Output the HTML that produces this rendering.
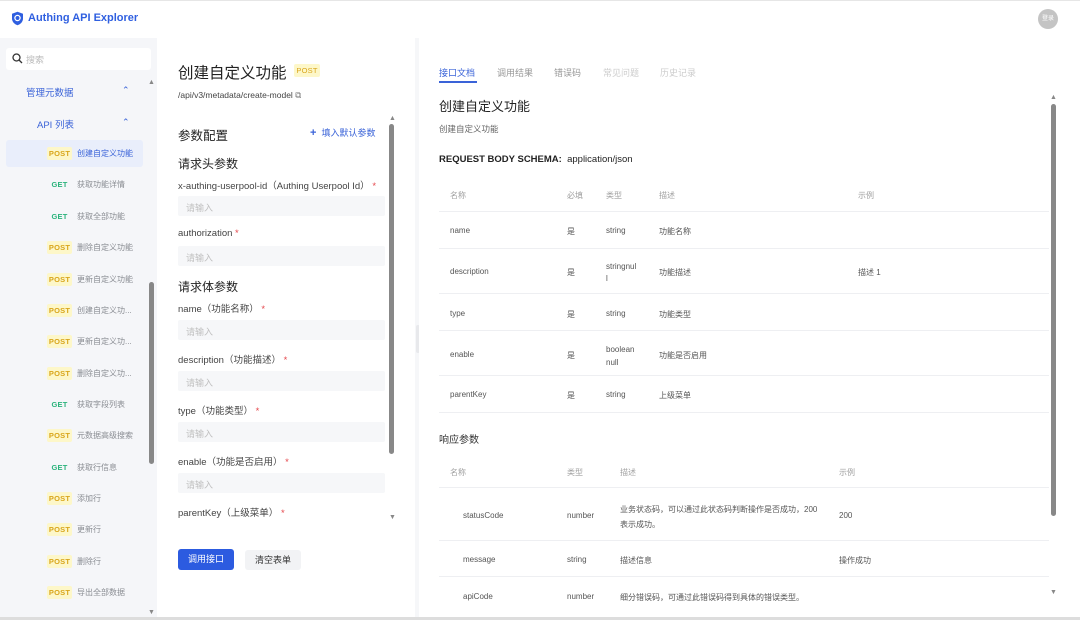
<!DOCTYPE html>
<html><head><meta charset="utf-8"><style>
*{margin:0;padding:0;box-sizing:border-box}
body{width:1080px;height:620px;overflow:hidden;background:#f6f7f9;font-family:"Liberation Sans","Noto Sans CJK SC",sans-serif;color:#333;position:relative}
.a{position:absolute;white-space:nowrap}
.hdr{left:0;top:0;width:1080px;height:38px;background:#fff;border-top:1px solid #e6e6e6}
.side{left:0;top:38px;width:157px;height:582px;background:#f5f6f9}
.mid{left:157px;top:38px;width:258px;height:582px;background:#fff}
.right{left:419px;top:38px;width:661px;height:582px;background:#fff}
.m{font-size:7.5px;width:25px;height:13px;line-height:13px;text-align:center;border-radius:2px;font-weight:bold;letter-spacing:.2px}
.post{background:#fdf7c9;color:#d9a61c}
.get{color:#2bb37c}
.it{font-size:8px;color:#8a8d93}
.lab{font-size:9.5px;color:#444}
.star{color:#e5484d}
.inp{left:178px;width:207px;height:20px;background:#f6f7f9;border-radius:2px;font-size:9px;color:#c0c0c0;padding:5px 8px}
.h{font-size:12px;color:#222}
.th{font-size:8px;color:#a0a0a0}
.td{font-size:8px;color:#555}
.ln{height:1px;background:#eeeff2}
.bar{background:#888;border-radius:3px}
.tri{font-size:7px;color:#888}
</style></head><body>
<div class="a hdr"></div>
<svg class="a" style="left:11px;top:11px" width="13" height="15" viewBox="0 0 13 15"><path d="M6.5 0.8L12 2.8V7.5C12 10.8 9.6 13.2 6.5 14.2C3.4 13.2 1 10.8 1 7.5V2.8Z" fill="#2f5fe0"/><circle cx="6.5" cy="7" r="2.6" fill="none" stroke="#fff" stroke-width="1.3"/></svg>
<div class="a" style="left:28px;top:12px;font-size:11px;font-weight:bold;color:#2f5fe0">Authing API Explorer</div>
<div class="a" style="left:1038px;top:9px;width:20px;height:20px;border-radius:50%;background:#c4c4c4;font-size:6px;color:#fff;text-align:center;line-height:20px">登录</div>

<div class="a side"></div>
<div class="a" style="left:6px;top:48px;width:145px;height:22px;background:#fff;border-radius:3px"></div>
<svg class="a" style="left:12px;top:53px" width="11" height="11" viewBox="0 0 11 11"><circle cx="4.5" cy="4.5" r="3.5" fill="none" stroke="#333" stroke-width="1.3"/><path d="M7 7L10 10" stroke="#333" stroke-width="1.3"/></svg>
<div class="a it" style="left:26px;top:53px;color:#bbb;font-size:9px">搜索</div>
<div class="a" style="left:26px;top:85px;font-size:9.5px;color:#3a63d8">管理元数据</div>
<div class="a" style="left:122px;top:85px;font-size:9px;color:#3a63d8">⌃</div>
<div class="a" style="left:37px;top:117px;font-size:9.5px;color:#3a63d8">API 列表</div>
<div class="a" style="left:122px;top:117px;font-size:9px;color:#3a63d8">⌃</div>
<div class="a" style="left:6px;top:140px;width:137px;height:27px;background:#e9eefb;border-radius:3px"></div>
<div class="a m post" style="left:47px;top:147px">POST</div><div class="a it" style="left:77px;top:148px;color:#3a63d8">创建自定义功能</div>
<div class="a m get" style="left:47px;top:178px">GET</div><div class="a it" style="left:77px;top:179px">获取功能详情</div>
<div class="a m get" style="left:47px;top:210px">GET</div><div class="a it" style="left:77px;top:211px">获取全部功能</div>
<div class="a m post" style="left:47px;top:241px">POST</div><div class="a it" style="left:77px;top:242px">删除自定义功能</div>
<div class="a m post" style="left:47px;top:273px">POST</div><div class="a it" style="left:77px;top:274px">更新自定义功能</div>
<div class="a m post" style="left:47px;top:304px">POST</div><div class="a it" style="left:77px;top:305px">创建自定义功...</div>
<div class="a m post" style="left:47px;top:335px">POST</div><div class="a it" style="left:77px;top:336px">更新自定义功...</div>
<div class="a m post" style="left:47px;top:367px">POST</div><div class="a it" style="left:77px;top:368px">删除自定义功...</div>
<div class="a m get" style="left:47px;top:398px">GET</div><div class="a it" style="left:77px;top:399px">获取字段列表</div>
<div class="a m post" style="left:47px;top:429px">POST</div><div class="a it" style="left:77px;top:430px">元数据高级搜索</div>
<div class="a m get" style="left:47px;top:461px">GET</div><div class="a it" style="left:77px;top:462px">获取行信息</div>
<div class="a m post" style="left:47px;top:492px">POST</div><div class="a it" style="left:77px;top:493px">添加行</div>
<div class="a m post" style="left:47px;top:523px">POST</div><div class="a it" style="left:77px;top:524px">更新行</div>
<div class="a m post" style="left:47px;top:555px">POST</div><div class="a it" style="left:77px;top:556px">删除行</div>
<div class="a m post" style="left:47px;top:586px">POST</div><div class="a it" style="left:77px;top:587px">导出全部数据</div>
<div class="a tri" style="left:148px;top:79px">▲</div>
<div class="a bar" style="left:149px;top:282px;width:5px;height:182px"></div>
<div class="a tri" style="left:148px;top:609px">▼</div>

<div class="a mid"></div>
<div class="a" style="left:178px;top:61px;font-size:15.5px;color:#222">创建自定义功能</div>
<div class="a m post" style="left:294px;top:64px;font-weight:normal;width:26px">POST</div>
<div class="a" style="left:178px;top:90px;font-size:8.5px;color:#444">/api/v3/metadata/create-model <span style="color:#777">⧉</span></div>
<div class="a" style="left:178px;top:125px;font-size:12.5px;color:#222">参数配置</div>
<div class="a" style="left:310px;top:126px;font-size:9px;color:#3a63d8"><b style="font-size:11px">+</b>&nbsp; 填入默认参数</div>
<div class="a h" style="left:178px;top:155px">请求头参数</div>
<div class="a lab" style="left:178px;top:178px">x-authing-userpool-id（Authing Userpool Id） <span class="star">*</span></div>
<div class="a inp" style="top:196px">请输入</div>
<div class="a lab" style="left:178px;top:228px">authorization <span class="star">*</span></div>
<div class="a inp" style="top:246px">请输入</div>
<div class="a h" style="left:178px;top:278px">请求体参数</div>
<div class="a lab" style="left:178px;top:301px">name（功能名称） <span class="star">*</span></div>
<div class="a inp" style="top:320px">请输入</div>
<div class="a lab" style="left:178px;top:352px">description（功能描述） <span class="star">*</span></div>
<div class="a inp" style="top:371px">请输入</div>
<div class="a lab" style="left:178px;top:403px">type（功能类型） <span class="star">*</span></div>
<div class="a inp" style="top:422px">请输入</div>
<div class="a lab" style="left:178px;top:454px">enable（功能是否启用） <span class="star">*</span></div>
<div class="a inp" style="top:473px">请输入</div>
<div class="a lab" style="left:178px;top:505px">parentKey（上级菜单） <span class="star">*</span></div>
<div class="a tri" style="left:389px;top:115px">▲</div>
<div class="a bar" style="left:389px;top:124px;width:5px;height:330px"></div>
<div class="a tri" style="left:389px;top:514px">▼</div>
<div class="a" style="left:178px;top:549px;width:56px;height:21px;background:#2c5be0;border-radius:3px;color:#fff;font-size:9px;text-align:center;line-height:21px">调用接口</div>
<div class="a" style="left:245px;top:550px;width:56px;height:20px;background:#f2f3f5;border-radius:3px;color:#333;font-size:9px;text-align:center;line-height:20px">清空表单</div>

<div class="a" style="left:416px;top:325px;width:4px;height:28px;background:#e8e9ec;border-radius:2px"></div>
<div class="a right"></div>
<div class="a" style="left:439px;top:66px;font-size:9px;color:#3a63d8">接口文档</div>
<div class="a" style="left:439px;top:81px;width:38px;height:2px;background:#3a63d8"></div>
<div class="a" style="left:497px;top:66px;font-size:9px;color:#999">调用结果</div>
<div class="a" style="left:554px;top:66px;font-size:9px;color:#999">错误码</div>
<div class="a" style="left:603px;top:66px;font-size:9px;color:#ccc">常见问题</div>
<div class="a" style="left:660px;top:66px;font-size:9px;color:#ccc">历史记录</div>
<div class="a" style="left:439px;top:96px;font-size:13px;color:#222">创建自定义功能</div>
<div class="a" style="left:439px;top:123px;font-size:8.5px;color:#666">创建自定义功能</div>
<div class="a" style="left:439px;top:154px;font-size:9.5px;color:#222"><b>REQUEST BODY SCHEMA:</b>&nbsp; application/json</div>
<div class="a th" style="left:450px;top:190px">名称</div><div class="a th" style="left:567px;top:190px">必填</div><div class="a th" style="left:606px;top:190px">类型</div><div class="a th" style="left:659px;top:190px">描述</div><div class="a th" style="left:858px;top:190px">示例</div>
<div class="a ln" style="left:439px;top:211px;width:610px"></div>
<div class="a td" style="left:450px;top:226px">name</div><div class="a td" style="left:567px;top:226px">是</div><div class="a td" style="left:606px;top:226px">string</div><div class="a td" style="left:659px;top:226px">功能名称</div>
<div class="a ln" style="left:439px;top:248px;width:610px"></div>
<div class="a td" style="left:450px;top:267px">description</div><div class="a td" style="left:567px;top:267px">是</div><div class="a td" style="left:606px;top:261px;line-height:12px">stringnul<br>l</div><div class="a td" style="left:659px;top:267px">功能描述</div><div class="a td" style="left:858px;top:267px">描述 1</div>
<div class="a ln" style="left:439px;top:293px;width:610px"></div>
<div class="a td" style="left:450px;top:309px">type</div><div class="a td" style="left:567px;top:309px">是</div><div class="a td" style="left:606px;top:309px">string</div><div class="a td" style="left:659px;top:309px">功能类型</div>
<div class="a ln" style="left:439px;top:330px;width:610px"></div>
<div class="a td" style="left:450px;top:350px">enable</div><div class="a td" style="left:567px;top:350px">是</div><div class="a td" style="left:606px;top:343px;line-height:13px">boolean<br>null</div><div class="a td" style="left:659px;top:350px">功能是否启用</div>
<div class="a ln" style="left:439px;top:375px;width:610px"></div>
<div class="a td" style="left:450px;top:390px">parentKey</div><div class="a td" style="left:567px;top:390px">是</div><div class="a td" style="left:606px;top:390px">string</div><div class="a td" style="left:659px;top:390px">上级菜单</div>
<div class="a ln" style="left:439px;top:412px;width:610px"></div>
<div class="a" style="left:439px;top:431px;font-size:10px;color:#333">响应参数</div>
<div class="a th" style="left:450px;top:467px">名称</div><div class="a th" style="left:567px;top:467px">类型</div><div class="a th" style="left:620px;top:467px">描述</div><div class="a th" style="left:839px;top:467px">示例</div>
<div class="a ln" style="left:439px;top:487px;width:610px"></div>
<div class="a td" style="left:463px;top:511px">statusCode</div><div class="a td" style="left:567px;top:511px">number</div><div class="a td" style="left:620px;top:502px;line-height:15px">业务状态码，可以通过此状态码判断操作是否成功，200<br>表示成功。</div><div class="a td" style="left:839px;top:511px">200</div>
<div class="a ln" style="left:439px;top:540px;width:610px"></div>
<div class="a td" style="left:463px;top:555px">message</div><div class="a td" style="left:567px;top:555px">string</div><div class="a td" style="left:620px;top:555px">描述信息</div><div class="a td" style="left:839px;top:555px">操作成功</div>
<div class="a ln" style="left:439px;top:576px;width:610px"></div>
<div class="a td" style="left:463px;top:592px">apiCode</div><div class="a td" style="left:567px;top:592px">number</div><div class="a td" style="left:620px;top:592px">细分错误码，可通过此错误码得到具体的错误类型。</div>
<div class="a tri" style="left:1050px;top:94px">▲</div>
<div class="a bar" style="left:1051px;top:104px;width:5px;height:412px"></div>
<div class="a tri" style="left:1050px;top:589px">▼</div>
<div class="a" style="left:0;top:617px;width:1080px;height:3px;background:#ddd"></div>
</body></html>
